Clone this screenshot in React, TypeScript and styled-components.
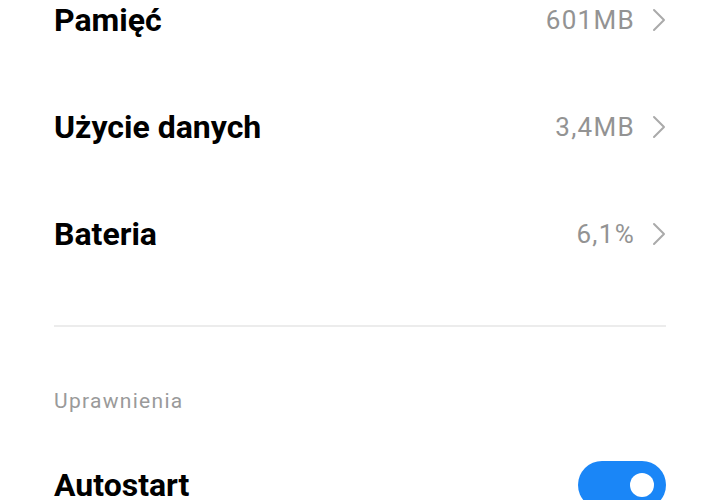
import styled, { createGlobalStyle } from "styled-components";

const Global = createGlobalStyle`
  html, body {
    margin: 0;
    padding: 0;
    background: #ffffff;
    font-family: Roboto, "Noto Sans", sans-serif;
    overflow: hidden;
  }
`;

const Page = styled.div`
  width: 720px;
  height: 500px;
  overflow: hidden;
  background: #ffffff;
`;

const Content = styled.div`
  margin-top: -34px;
  padding: 0 54px;
`;

const Row = styled.div<{ gapTop?: number }>`
  height: 107px;
  margin-top: ${({ gapTop }) => gapTop ?? 0}px;
  display: flex;
  align-items: center;
  justify-content: space-between;
`;

const Title = styled.div`
  font-size: 32px;
  font-weight: 700;
  color: #000000;
`;

const ValueBox = styled.div`
  display: flex;
  align-items: center;
  gap: 17px;
`;

const Value = styled.span`
  font-size: 26px;
  letter-spacing: 1.3px;
  color: #939393;
`;

const Divider = styled.hr`
  border: none;
  height: 2px;
  background: #ececec;
  margin: 38px 0 0;
`;

const SectionLabel = styled.div`
  font-size: 21px;
  letter-spacing: 1.3px;
  color: #9a9a9a;
  margin-top: 60px;
  line-height: 28px;
`;

const Toggle = styled.div<{ on: boolean }>`
  width: 88px;
  height: 48px;
  border-radius: 24px;
  background: ${({ on }) => (on ? "#1a86f7" : "#d8d8d8")};
  display: flex;
  align-items: center;
  justify-content: ${({ on }) => (on ? "flex-end" : "flex-start")};
  padding: 0 12px;
  box-sizing: border-box;
`;

const Knob = styled.div`
  width: 24px;
  height: 24px;
  border-radius: 50%;
  background: #ffffff;
`;

const Chevron = () => (
  <svg width="14" height="24" viewBox="0 0 14 24">
    <path d="M2 2 L12 12 L2 22" fill="none" stroke="#aaaaaa" strokeWidth="2" strokeLinecap="round" strokeLinejoin="round" />
  </svg>
);

const items = [
  { title: "Pamięć", value: "601MB" },
  { title: "Użycie danych", value: "3,4MB" },
  { title: "Bateria", value: "6,1%" },
];

export default function App() {
  return (
    <Page>
      <Global />
      <Content>
        {items.map((it) => (
          <Row key={it.title}>
            <Title>{it.title}</Title>
            <ValueBox>
              <Value>{it.value}</Value>
              <Chevron />
            </ValueBox>
          </Row>
        ))}
        <Divider />
        <SectionLabel>Uprawnienia</SectionLabel>
        <Row gapTop={16}>
          <Title>Autostart</Title>
          <Toggle on={true}>
            <Knob />
          </Toggle>
        </Row>
      </Content>
    </Page>
  );
}
